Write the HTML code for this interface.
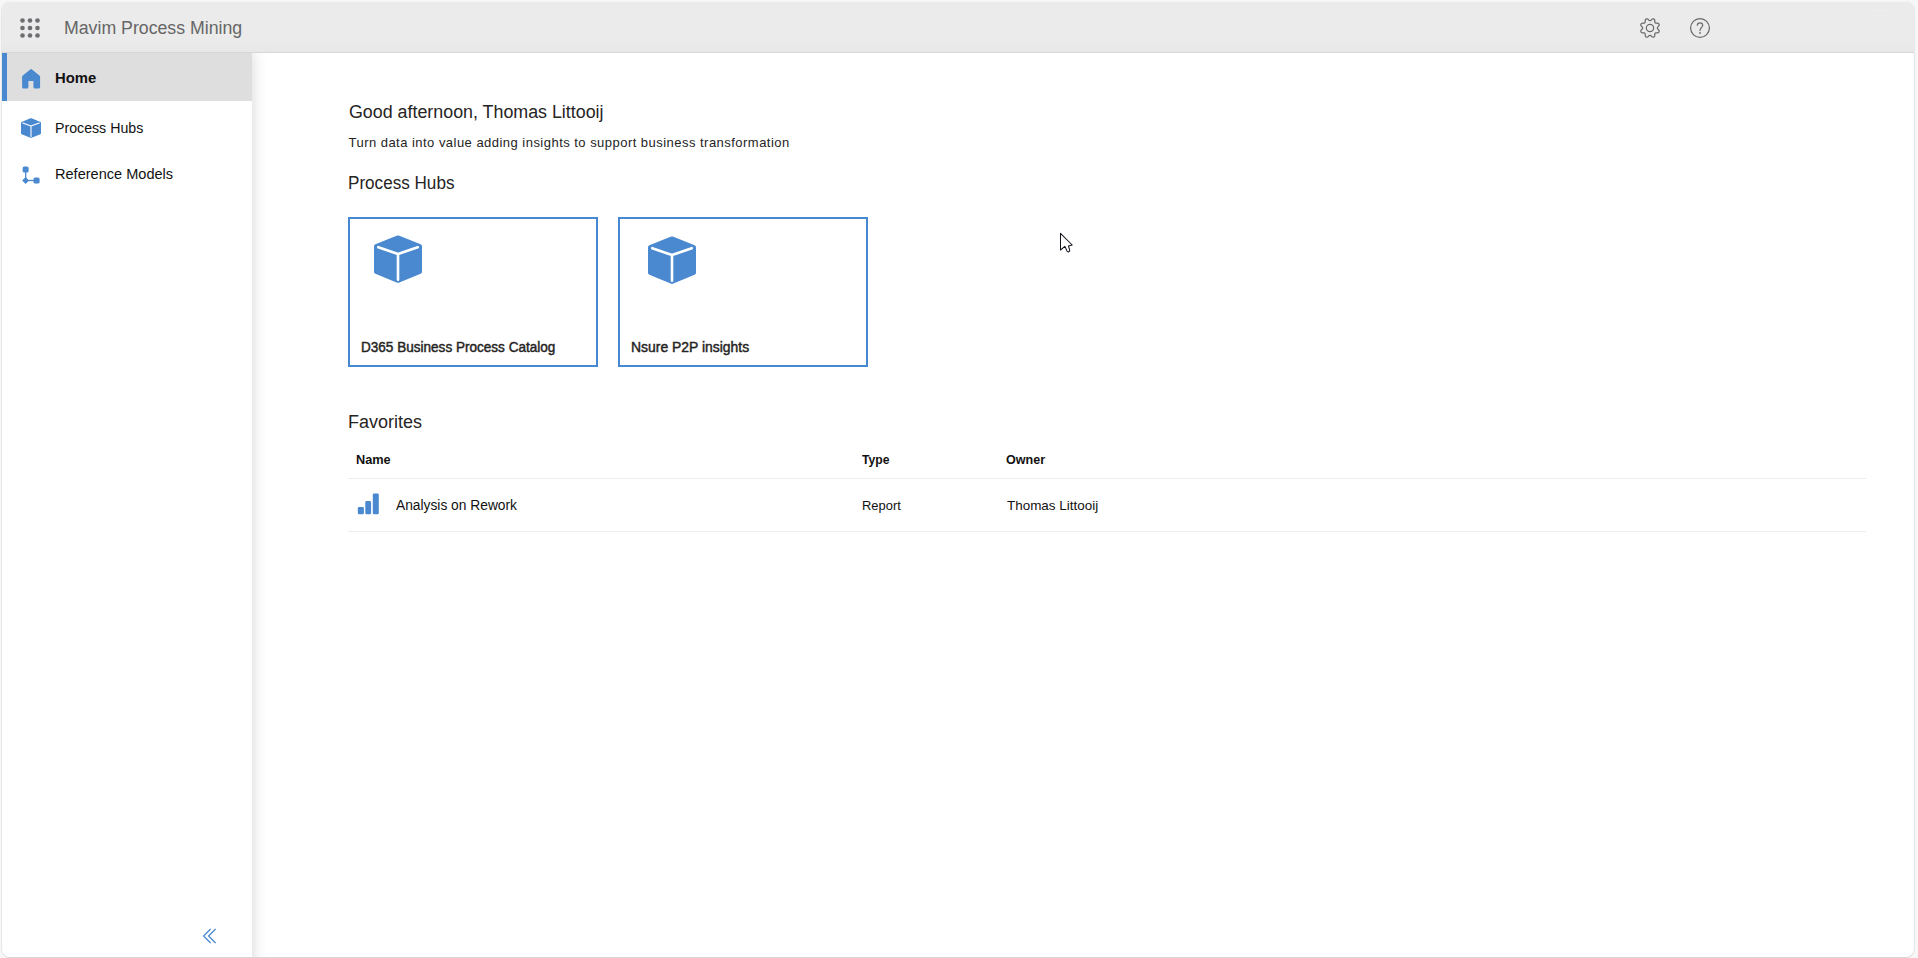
<!DOCTYPE html>
<html lang="en">
<head>
<meta charset="utf-8">
<title>Mavim Process Mining</title>
<style>
  html, body { margin: 0; padding: 0; }
  body {
    width: 1918px; height: 958px; overflow: hidden; position: relative;
    background: #f7f7f7;
    font-family: "Liberation Sans", sans-serif;
    color: #252423;
  }
  .win {
    position: absolute; left: 2px; top: 2px; width: 1912px; height: 955px;
    background: #fff; border-radius: 8px; overflow: hidden;
    box-shadow: 0 1px 0 0 #d9d9d9, 0 0 0 1px #e7e7e7;
  }
  .abs { position: absolute; }
  .t { position: absolute; white-space: nowrap; line-height: 1; display: inline-block; transform-origin: 0 50%; }
  /* header */
  .hdr { position: absolute; left: 0; top: 0; width: 1912px; height: 50px; background: linear-gradient(#ebebeb 0, #ebebeb 76%, #e8e8e8 100%);
         box-shadow: 0 1px 0 #d8d7d8; z-index: 5; }
  /* sidebar */
  .side { position: absolute; left: 0; top: 50px; width: 250px; height: 940px; background: #fff;
          box-shadow: 1px 0 14px rgba(0,0,0,0.15); z-index: 3; }
  .homerow { position: absolute; left: 0; top: 1px; width: 250px; height: 48px; background: #dedede; }
  .homerow:before { content: ""; position: absolute; left: 0; top: 0; width: 5px; height: 48px; background: #4a89d0; }
  /* content */
  .card { position: absolute; top: 215px; width: 246px; height: 146px; border: 2px solid #4688d1; background: #fff; }
  .hr { position: absolute; left: 346px; width: 1518px; height: 1px; background: #ecedf3; }
</style>
</head>
<body>
<div class="win">

  <!-- header -->
  <div class="hdr">
    <svg class="abs" style="left:16px;top:14px" width="24" height="24" viewBox="0 0 24 24">
      <g fill="#6d6e71">
        <circle cx="4.5" cy="4.5" r="2.3"/><circle cx="12" cy="4.5" r="2.3"/><circle cx="19.5" cy="4.5" r="2.3"/>
        <circle cx="4.5" cy="12" r="2.3"/><circle cx="12" cy="12" r="2.3"/><circle cx="19.5" cy="12" r="2.3"/>
        <circle cx="4.5" cy="19.5" r="2.3"/><circle cx="12" cy="19.5" r="2.3"/><circle cx="19.5" cy="19.5" r="2.3"/>
      </g>
    </svg>
    <span class="t" id="t_title" style="left:62px;top:17px;font-size:18px;color:#666;transform:scaleX(0.984)">Mavim Process Mining</span>

    <!-- gear -->
    <svg class="abs" style="left:1636px;top:14px" width="24" height="24" viewBox="0 0 24 24" fill="none" stroke="#6b6b6b" stroke-width="1.25" stroke-linejoin="round">
      <circle cx="12" cy="12" r="3.65"/>
      <path d="M19.35 12.00L19.43 12.49L19.76 13.02L20.41 13.67L21.00 14.41L21.19 15.12L21.05 15.75L20.70 16.29L20.07 16.66L19.13 16.76L18.21 16.77L17.60 16.91L17.20 17.20L16.91 17.60L16.77 18.21L16.76 19.13L16.66 20.07L16.29 20.70L15.75 21.05L15.12 21.19L14.41 21.00L13.67 20.41L13.02 19.76L12.49 19.43L12.00 19.35L11.51 19.43L10.98 19.76L10.33 20.41L9.59 21.00L8.88 21.19L8.25 21.05L7.71 20.70L7.34 20.07L7.24 19.13L7.23 18.21L7.09 17.60L6.80 17.20L6.40 16.91L5.79 16.77L4.87 16.76L3.93 16.66L3.30 16.29L2.95 15.75L2.81 15.12L3.00 14.41L3.59 13.67L4.24 13.02L4.57 12.49L4.65 12.00L4.57 11.51L4.24 10.98L3.59 10.33L3.00 9.59L2.81 8.88L2.95 8.25L3.30 7.71L3.93 7.34L4.87 7.24L5.79 7.23L6.40 7.09L6.80 6.80L7.09 6.40L7.23 5.79L7.24 4.87L7.34 3.93L7.71 3.30L8.25 2.95L8.88 2.81L9.59 3.00L10.33 3.59L10.98 4.24L11.51 4.57L12.00 4.65L12.49 4.57L13.02 4.24L13.67 3.59L14.41 3.00L15.12 2.81L15.75 2.95L16.29 3.30L16.66 3.93L16.76 4.87L16.77 5.79L16.91 6.40L17.20 6.80L17.60 7.09L18.21 7.23L19.13 7.24L20.07 7.34L20.70 7.71L21.05 8.25L21.19 8.88L21.00 9.59L20.41 10.33L19.76 10.98L19.43 11.51Z"/>
    </svg>
    <!-- help -->
    <svg class="abs" style="left:1686px;top:14px" width="24" height="24" viewBox="0 0 24 24" fill="none" stroke="#6b6b6b" stroke-width="1.25">
      <circle cx="12" cy="12" r="9.4"/>
      <path d="M9.3 9.2 C9.3 7.7 10.5 6.9 12 6.9 C13.5 6.9 14.7 7.8 14.7 9.2 C14.7 11.3 12 11.6 12 14.6" stroke-linecap="round"/>
      <circle cx="12" cy="16.9" r="0.95" fill="#6b6b6b" stroke="none"/>
    </svg>
  </div>

  <div class="abs" style="left:1873px;top:8px;width:10px;height:1px;background:#efefef;z-index:6"></div>

  <!-- sidebar -->
  <div class="side">
    <div class="homerow"></div>
    <!-- home icon -->
    <svg class="abs" style="left:18px;top:15px" width="24" height="24" viewBox="0 0 24 24">
      <path d="M10.2 2.45 Q11.1 1.75 12 2.45 L19.4 8.5 Q20.1 9.05 20.1 10 V19.9 Q20.1 21.4 18.6 21.4 H14.9 Q13.4 21.4 13.4 19.9 V14.1 H8.4 V19.9 Q8.4 21.4 6.9 21.4 H3.6 Q2.1 21.4 2.1 19.9 V10 Q2.1 9.05 2.8 8.5 Z" fill="#4a89d0"/>
    </svg>
    <span class="t" id="t_home" style="left:53px;top:18px;font-size:15px;font-weight:bold;color:#111;transform:scaleX(0.99)">Home</span>

    <!-- cube icon -->
    <svg class="abs" style="left:19px;top:66px" width="20" height="20" viewBox="0 0 48 48"><path d="M22.6 0.7 Q24 0.1 25.4 0.7 L46.6 9.3 Q48 9.9 48 11.4 V36.7 Q48 38.2 46.6 38.8 L25.4 47.4 Q24 48 22.6 47.4 L1.4 38.8 Q0 38.2 0 36.7 V11.4 Q0 9.9 1.4 9.3 Z" fill="#4a89d0"/><path d="M4.3 12.2 L24 19.1 L43.7 12.2 M24 19.1 V44.8" fill="none" stroke="#fff" stroke-width="2.6" stroke-linecap="round" stroke-linejoin="round"/></svg>
    <span class="t" id="t_ph" style="left:53px;top:68px;font-size:15px;color:#111;transform:scaleX(0.945)">Process Hubs</span>

    <!-- reference models icon -->
    <svg class="abs" style="left:18px;top:111px" width="24" height="24" viewBox="0 0 24 24" fill="#4a89d0">
      <rect x="2.65" y="3.5" width="6" height="6" rx="1.6"/>
      <rect x="5" y="9" width="1.3" height="6"/>
      <path d="M5.6 14 L9.1 17.5 L5.6 21 L2.1 17.5 Z"/>
      <rect x="8" y="16.85" width="6" height="1.3"/>
      <rect x="13.5" y="14.5" width="6.1" height="6.1" rx="1.6"/>
    </svg>
    <span class="t" id="t_rm" style="left:53px;top:114px;font-size:15px;color:#111;transform:scaleX(0.97)">Reference Models</span>

    <!-- collapse chevrons -->
    <svg class="abs" style="left:196px;top:874px" width="24" height="20" viewBox="0 0 24 20" fill="none" stroke="#4a89d0" stroke-width="1.3">
      <path d="M12.6 3 L5.6 10 L12.6 17"/>
      <path d="M17.6 3 L10.6 10 L17.6 17"/>
    </svg>
  </div>

  <!-- main content -->
  <span class="t" id="t_good" style="left:346.5px;top:101px;font-size:18px;transform:scaleX(0.991)">Good afternoon, Thomas Littooij</span>
  <span class="t" id="t_turn" style="left:346.5px;top:134px;font-size:13px;letter-spacing:0.47px">Turn data into value adding insights to support business transformation</span>
  <span class="t" id="t_hubs" style="left:346px;top:172px;font-size:18px;transform:scaleX(0.95)">Process Hubs</span>

  <div class="card" style="left:346px">
    <svg class="abs" style="left:24px;top:15.85px" width="48" height="48" viewBox="0 0 48 48"><path d="M22.6 0.7 Q24 0.1 25.4 0.7 L46.6 9.3 Q48 9.9 48 11.4 V36.7 Q48 38.2 46.6 38.8 L25.4 47.4 Q24 48 22.6 47.4 L1.4 38.8 Q0 38.2 0 36.7 V11.4 Q0 9.9 1.4 9.3 Z" fill="#4a89d0"/><path d="M4.3 12.2 L24 19.1 L43.7 12.2 M24 19.1 V44.8" fill="none" stroke="#fff" stroke-width="2.6" stroke-linecap="round" stroke-linejoin="round"/></svg>
    <span class="t" id="t_c1" style="left:11px;top:121px;font-size:14px;-webkit-text-stroke:0.45px #252423;transform:scaleX(0.968)">D365 Business Process Catalog</span>
  </div>
  <div class="card" style="left:616px">
    <svg class="abs" style="left:28px;top:16.75px" width="48" height="48" viewBox="0 0 48 48"><path d="M22.6 0.7 Q24 0.1 25.4 0.7 L46.6 9.3 Q48 9.9 48 11.4 V36.7 Q48 38.2 46.6 38.8 L25.4 47.4 Q24 48 22.6 47.4 L1.4 38.8 Q0 38.2 0 36.7 V11.4 Q0 9.9 1.4 9.3 Z" fill="#4a89d0"/><path d="M4.3 12.2 L24 19.1 L43.7 12.2 M24 19.1 V44.8" fill="none" stroke="#fff" stroke-width="2.6" stroke-linecap="round" stroke-linejoin="round"/></svg>
    <span class="t" id="t_c2" style="left:11px;top:121px;font-size:14px;-webkit-text-stroke:0.45px #252423;transform:scaleX(0.994)">Nsure P2P insights</span>
  </div>

  <span class="t" id="t_fav" style="left:346px;top:411px;font-size:18px;">Favorites</span>
  <span class="t" id="t_name" style="left:354.4px;top:451px;font-size:13px;font-weight:bold;color:#111;transform:scaleX(0.98)">Name</span>
  <span class="t" id="t_type" style="left:859.9px;top:451px;font-size:13px;font-weight:bold;color:#111;transform:scaleX(0.935)">Type</span>
  <span class="t" id="t_owner" style="left:1004.2px;top:451px;font-size:13px;font-weight:bold;color:#111;transform:scaleX(0.965)">Owner</span>
  <div class="hr" style="top:476px"></div>

  <svg class="abs" style="left:354px;top:490px" width="24" height="24" viewBox="0 0 24 24" fill="#4a89d0">
    <rect x="1.8" y="14.9" width="6.1" height="7.4" rx="1.3"/>
    <rect x="9.3" y="9.1" width="5.8" height="13.2" rx="1.3"/>
    <rect x="16.8" y="1.5" width="6" height="20.8" rx="1.3"/>
  </svg>
  <span class="t" id="t_an" style="left:394px;top:496px;font-size:14px;color:#111;transform:scaleX(0.984)">Analysis on Rework</span>
  <span class="t" id="t_rep" style="left:860.4px;top:497px;font-size:13px;color:#111;transform:scaleX(0.995)">Report</span>
  <span class="t" id="t_tl" style="left:1004.7px;top:497px;font-size:13px;color:#111;transform:scaleX(1.034)">Thomas Littooij</span>
  <div class="hr" style="top:529px"></div>

  <!-- mouse cursor -->
  <svg class="abs" style="left:1056px;top:229px" width="18" height="26" viewBox="-0.5 -0.3 18 26">
    <path d="M2 2 V18.7 L6.4 15.1 L8.5 19.7 Q9.1 20.9 10.3 20.4 Q11.6 19.9 11.2 18.7 L10 14.8 L13.7 13.7 Z" fill="#fff" stroke="#14141f" stroke-width="1.05" stroke-linejoin="round"/>
  </svg>

</div>

<div class="abs" style="left:9px;top:1px;width:1898px;height:1px;background:#f5f5f5"></div>


</body>
</html>
